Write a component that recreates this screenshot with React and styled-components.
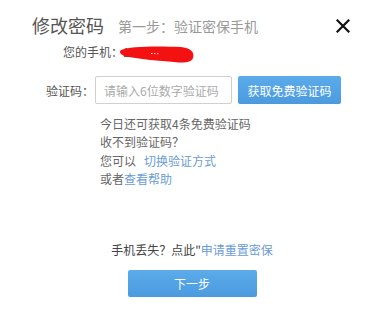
import React from 'react';
import styled, { createGlobalStyle } from 'styled-components';

const GlobalStyle = createGlobalStyle`
  html, body {
    margin: 0;
    padding: 0;
    background: #fff;
  }
  body {
    font-family: "Microsoft YaHei", "Noto Sans CJK SC", "Liberation Sans", sans-serif;
    color: #666;
  }
`;

const Dialog = styled.div`
  width: 384px;
  height: 336px;
  box-sizing: border-box;
  padding: 13px 34px 0 32px;
`;

const Header = styled.div`
  display: flex;
  align-items: center;
  height: 25px;
`;

const Title = styled.h2`
  margin: 0;
  font-size: 18px;
  font-weight: normal;
  color: #555;
  line-height: 25px;
`;

const Step = styled.span`
  margin-left: 14px;
  font-size: 14px;
  color: #999;
  line-height: 25px;
  padding-top: 1px;
`;

const Close = styled.button`
  margin-left: auto;
  width: 14px;
  height: 14px;
  padding: 0;
  border: 0;
  background: none;
  cursor: pointer;
  display: flex;
  svg {
    display: block;
  }
`;

const PhoneRow = styled.div`
  display: flex;
  align-items: center;
  margin: 4px 0 0 31px;
  height: 18px;
  font-size: 12px;
  color: #555;
`;

const Redacted = styled.span`
  position: relative;
  display: inline-block;
  width: 72px;
  height: 14px;
  line-height: 16px;
  color: #555;

  svg {
    position: absolute;
    left: -4px;
    top: 2px;
  }
`;

const CodeRow = styled.div`
  display: flex;
  align-items: center;
  margin: 16px 0 0 14px;
  height: 28px;
`;

const Label = styled.label`
  font-size: 12px;
  color: #555;
  width: 49px;
`;

const Input = styled.input`
  box-sizing: border-box;
  width: 137px;
  height: 28px;
  padding: 0 8px;
  border: 1px solid #d0d0d0;
  border-radius: 2px;
  font-family: inherit;
  font-size: 12px;
  color: #333;
  outline: none;

  &::placeholder {
    color: #aaa;
  }
`;

const Button = styled.button`
  box-sizing: border-box;
  height: ${p => p.$h || 28}px;
  width: ${p => p.$w}px;
  margin-left: ${p => p.$gap || 0}px;
  border: 0;
  border-radius: 2px;
  background: linear-gradient(180deg, #5caceb, #4a9ade);
  color: #fff;
  font-family: inherit;
  font-size: 12px;
  cursor: pointer;
  padding: 0;
`;

const Tips = styled.div`
  margin: 11px 0 0 68px;
  font-size: 12px;
  line-height: 18.3px;
  color: #666;

  p {
    margin: 0;
  }
`;

const Link = styled.a`
  color: #6a9cd4;
  text-decoration: none;
  margin-left: ${p => p.$gap || 0}px;
`;

const Footer = styled.div`
  display: flex;
  flex-direction: column;
  align-items: center;
  margin: 53px 0 0 -32px;
  width: 384px;
  font-size: 12px;
  color: #444;
  line-height: 18px;
`;

const LostLine = styled.p`
  margin: 0 0 11px;
`;

const App = () => (
  <>
    <GlobalStyle />
    <Dialog>
      <Header>
        <Title>修改密码</Title>
        <Step>第一步：验证密保手机</Step>
        <Close aria-label="关闭">
          <svg width="14" height="14" viewBox="0 0 14 14">
            <path d="M1.5 1.5 L12.5 12.5 M12.5 1.5 L1.5 12.5" stroke="#111" strokeWidth="2.2" strokeLinecap="square" />
          </svg>
        </Close>
      </Header>

      <PhoneRow>
        您的手机：
        <Redacted>
          1·
          <svg width="78" height="18" viewBox="0 0 78 18">
            <path
              d="M2 4 C10 0, 40 0, 62 1 C71 2, 76 6, 74 12 C72 17, 64 17, 55 16 C40 15, 22 13, 10 11 C3 10, -1 7, 2 4 Z"
              fill="#f31111"
            />
            <path d="M32 7.5 L40 7.8" stroke="#fff" strokeWidth="1" strokeDasharray="1.5 1.5" opacity="0.85" />
          </svg>
        </Redacted>
      </PhoneRow>

      <CodeRow>
        <Label>验证码：</Label>
        <Input placeholder="请输入6位数字验证码" />
        <Button $w={103} $gap={6}>获取免费验证码</Button>
      </CodeRow>

      <Tips>
        <p>今日还可获取4条免费验证码</p>
        <p>收不到验证码？</p>
        <p>
          您可以<Link $gap={8} href="#">切换验证方式</Link>
        </p>
        <p>
          或者<Link href="#">查看帮助</Link>
        </p>
      </Tips>

      <Footer>
        <LostLine>
          手机丢失？点此"<Link href="#">申请重置密保</Link>
        </LostLine>
        <Button $w={129} $h={27}>下一步</Button>
      </Footer>
    </Dialog>
  </>
);

export default App;
